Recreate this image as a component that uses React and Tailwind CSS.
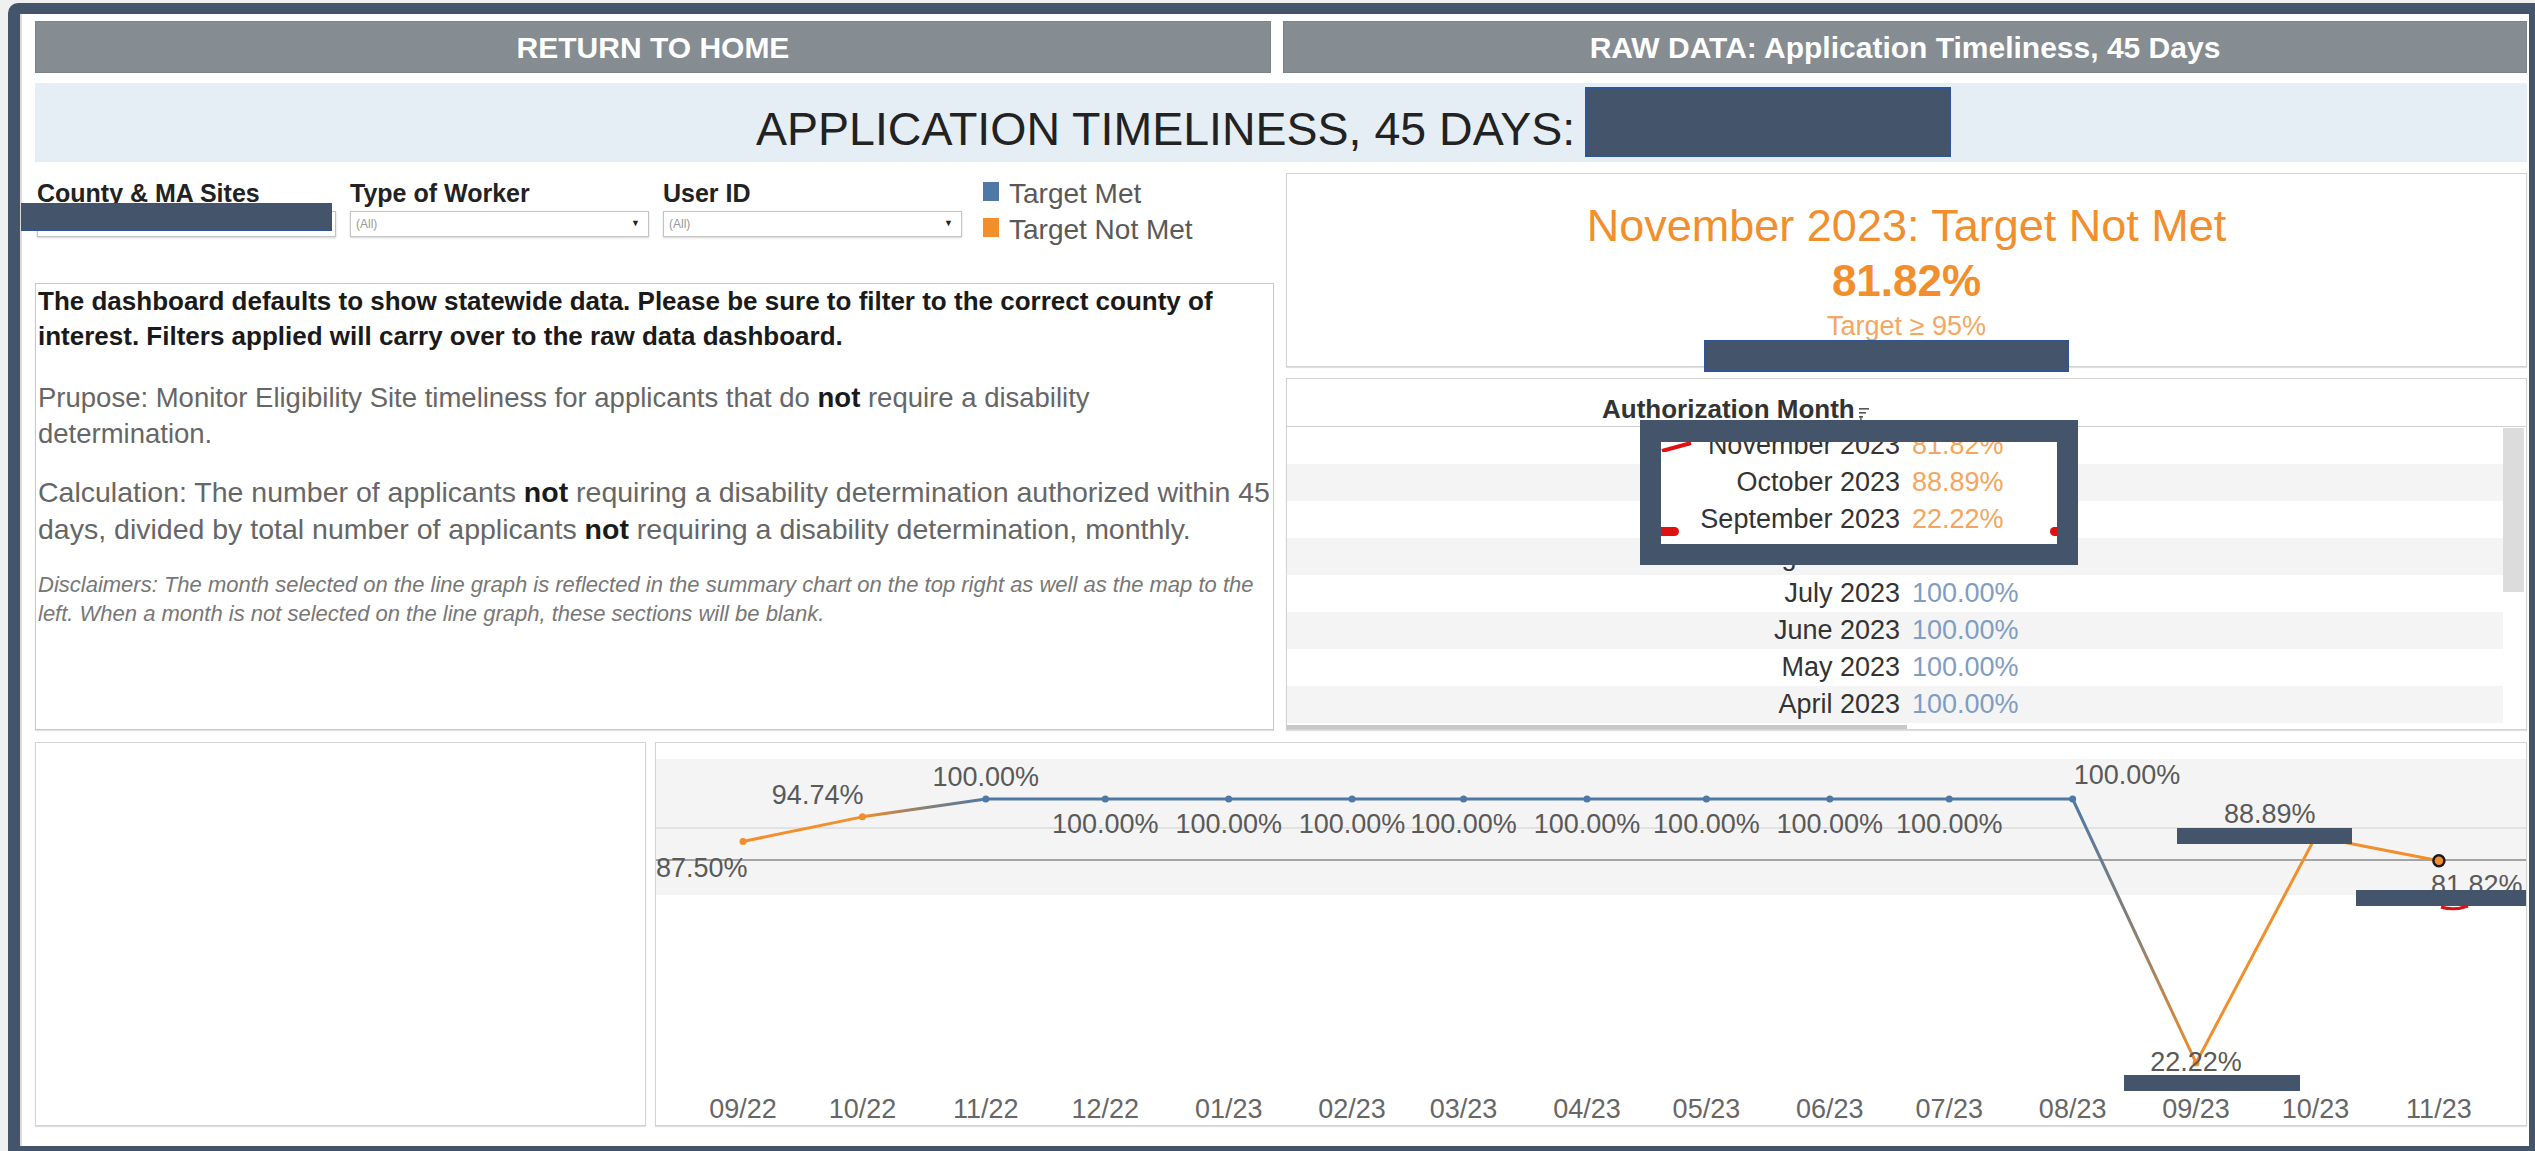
import React from 'react';

const ORANGE = '#f28e2b';
const BLUE = '#4e79a7';

// days are counted from 2022-09-01 so the axis spacing follows month length
const POINTS = [
  { label: '09/22', day: 0, value: 87.5 },
  { label: '10/22', day: 30, value: 94.74 },
  { label: '11/22', day: 61, value: 100 },
  { label: '12/22', day: 91, value: 100 },
  { label: '01/23', day: 122, value: 100 },
  { label: '02/23', day: 153, value: 100 },
  { label: '03/23', day: 181, value: 100 },
  { label: '04/23', day: 212, value: 100 },
  { label: '05/23', day: 242, value: 100 },
  { label: '06/23', day: 273, value: 100 },
  { label: '07/23', day: 303, value: 100 },
  { label: '08/23', day: 334, value: 100 },
  { label: '09/23', day: 365, value: 22.22 },
  { label: '10/23', day: 395, value: 88.89 },
  { label: '11/23', day: 426, value: 81.82 },
];

const TABLE_ROWS = [
  { month: 'November 2023', value: '81.82%', met: false },
  { month: 'October 2023', value: '88.89%', met: false },
  { month: 'September 2023', value: '22.22%', met: false },
  { month: 'August 2023', value: '100.00%', met: true },
  { month: 'July 2023', value: '100.00%', met: true },
  { month: 'June 2023', value: '100.00%', met: true },
  { month: 'May 2023', value: '100.00%', met: true },
  { month: 'April 2023', value: '100.00%', met: true },
  { month: 'March 2023', value: '100.00%', met: true },
];

const FILTERS = ['County & MA Sites', 'Type of Worker', 'User ID'];

const px = (d) => 87 + d * 3.981;
const py = (v) => 56 + (100 - v) * 3.394;

function TimelinessChart() {
  const pts = POINTS.map((p) => ({ ...p, x: px(p.day), y: py(p.value), met: p.value >= 95 }));
  const segs = pts.slice(0, -1).map((a, i) => ({ a, b: pts[i + 1], i }));

  // data label placement per point
  const labels = [
    { i: 0, dx: -87, y: 134, anchor: 'start' },
    { i: 1, dx: 1, y: 61, anchor: 'end' },
    { i: 2, dx: 0, y: 43, anchor: 'middle' },
    ...[3, 4, 5, 6, 7, 8, 9, 10].map((i) => ({ i, dx: 0, y: 90, anchor: 'middle' })),
    { i: 11, dx: 1, y: 41, anchor: 'start' },
    { i: 12, dx: 0, y: 328, anchor: 'middle' },
    { i: 13, dx: 0, y: 80, anchor: 'end' },
    { i: 14, dx: -8, y: 151, anchor: 'start' },
  ];
  const fmt = (v) => v.toFixed(2) + '%';

  return (
    <svg width="1870" height="382" className="block" fontFamily="'Liberation Sans', Arial, sans-serif">
      <defs>
        {segs
          .filter((s) => s.a.met !== s.b.met)
          .map((s) => (
            <linearGradient key={s.i} id={`seg-${s.i}`} gradientUnits="userSpaceOnUse" x1={s.a.x} y1={s.a.y} x2={s.b.x} y2={s.b.y}>
              <stop offset="0" stopColor={s.a.met ? BLUE : ORANGE} />
              <stop offset="0.5" stopColor="#8a7f72" />
              <stop offset="1" stopColor={s.b.met ? BLUE : ORANGE} />
            </linearGradient>
          ))}
      </defs>

      <rect x="0" y="16" width="1870" height="136" fill="#f4f4f4" />
      <line x1="0" y1="85" x2="1870" y2="85" stroke="#e2e2e2" strokeWidth="2" />
      <line x1="0" y1="117" x2="1870" y2="117" stroke="#a3a3a3" strokeWidth="2" />

      {segs.map((s) => (
        <line
          key={s.i}
          x1={s.a.x}
          y1={s.a.y}
          x2={s.b.x}
          y2={s.b.y}
          strokeWidth="3"
          strokeLinecap="round"
          stroke={s.a.met === s.b.met ? (s.a.met ? BLUE : ORANGE) : `url(#seg-${s.i})`}
        />
      ))}
      {pts.slice(0, -1).map((p) => (
        <circle key={p.label} cx={p.x} cy={p.y} r="3.5" fill={p.met ? BLUE : ORANGE} />
      ))}
      <circle cx={pts[14].x} cy={pts[14].y} r="5.5" fill={ORANGE} stroke="#1a1a1a" strokeWidth="2.5" />

      {labels.map((l) => (
        <text key={l.i} x={pts[l.i].x + l.dx} y={l.y} textAnchor={l.anchor} fontSize="27" fill="#595959">
          {fmt(pts[l.i].value)}
        </text>
      ))}

      {pts.map((p) => (
        <text key={p.label} x={p.x} y="375" textAnchor="middle" fontSize="27" fill="#666">
          {p.label}
        </text>
      ))}

      {/* redaction bars */}
      <rect x="1521" y="85" width="175" height="16" fill="#44546a" />
      <rect x="1700" y="147" width="180" height="16" fill="#44546a" />
      <rect x="1468" y="332" width="176" height="16" fill="#44546a" />
      <path d="M1785 164 Q1798 168 1812 163" stroke="#e01010" strokeWidth="3" fill="none" />
    </svg>
  );
}

function SortIcon() {
  return (
    <svg width="14" height="18" viewBox="0 0 14 18" className="ml-[3px] mt-[8px]">
      <rect x="1" y="4" width="10" height="1.6" fill="#555" />
      <rect x="1" y="8" width="7" height="1.6" fill="#555" />
      <rect x="1" y="12" width="4" height="1.6" fill="#555" />
      <rect x="2.2" y="13" width="1.4" height="4" fill="#555" />
    </svg>
  );
}

function TableRow({ row, shaded, monthWidth }) {
  return (
    <div className={`flex h-[37px] items-center text-[27px] leading-none ${shaded ? 'bg-[#f4f4f4]' : ''}`}>
      <span className="shrink-0 text-right text-[#333]" style={{ width: monthWidth }}>
        {row.month}
      </span>
      <span className={`ml-[12px] ${row.met ? 'text-[#7f9dc3]' : 'text-[#f5a55e]'}`}>{row.value}</span>
    </div>
  );
}

export default function App() {
  return (
    <div className="min-h-screen w-full bg-[#f0f0f0] pl-[8px] pt-[3px] font-['Liberation_Sans',Arial,sans-serif]">
      <div className="h-[1148px] w-[2527px] rounded-tl-[10px] bg-[#44546a] pb-[5px] pl-[12px] pr-[6px] pt-[11px]">
        <div className="flex h-full flex-col border-l-2 border-[#dcdcdc] bg-white pb-[20px] pl-[13px] pr-[2px] pt-[7px]">
          {/* nav buttons */}
          <div className="flex h-[52px] gap-[12px]">
            <div className="flex w-[1236px] items-center justify-center border border-[#7a8187] bg-[#858c92] text-[30px] font-bold text-white">
              RETURN TO HOME
            </div>
            <div className="flex flex-1 items-center justify-center border border-[#7a8187] bg-[#858c92] text-[30px] font-bold text-white">
              RAW DATA: Application Timeliness, 45 Days
            </div>
          </div>

          {/* title band */}
          <div className="relative mt-[10px] h-[79px] bg-[#e6eef5] pl-[721px] pt-[23px]">
            <div className="whitespace-nowrap text-[46.5px] leading-none text-[#222]">APPLICATION TIMELINESS, 45 DAYS:</div>
            <div className="absolute left-[1550px] top-[4px] h-[70px] w-[366px] border-2 border-[#2f5597] bg-[#44546a]" />
          </div>

          {/* middle */}
          <div className="mt-[11px] flex h-[557px] gap-[12px]">
            <div className="flex w-[1239px] flex-col">
              <div className="relative flex h-[110px] gap-[14px] pl-[2px] pt-[5px]">
                {FILTERS.map((f) => (
                  <div key={f} className="w-[299px]">
                    <div className="h-[30px] whitespace-nowrap text-[25px] font-bold leading-[30px] text-[#222]">{f}</div>
                    <div className="mt-[3px] flex h-[26px] items-center justify-between border border-[#c4c4c4] bg-white pl-[5px] pr-[8px] shadow-[0_1px_2px_rgba(0,0,0,0.18)]">
                      <span className="text-[12px] text-[#999]">(All)</span>
                      <span className="text-[9px] text-[#222]">▼</span>
                    </div>
                  </div>
                ))}
                <div className="-mt-[2px] ml-[7px] flex flex-col">
                  <div className="flex h-[36px] items-start gap-[10px]">
                    <span className="mt-[6px] h-[19px] w-[16px] bg-[#4e79a7]" />
                    <span className="text-[28px] leading-[36px] text-[#595959]">Target Met</span>
                  </div>
                  <div className="flex h-[36px] items-start gap-[10px]">
                    <span className="mt-[6px] h-[19px] w-[16px] bg-[#f28e2b]" />
                    <span className="text-[28px] leading-[36px] text-[#595959]">Target Not Met</span>
                  </div>
                </div>
                <div className="absolute left-[-14px] top-[30px] h-[28px] w-[311px] border border-b-2 border-[#2f5597] bg-[#44546a]" />
              </div>

              <div className="flex-1 border border-[#c9c9c9] px-[2px] shadow-[0_1px_1px_rgba(0,0,0,0.12)]">
                <p className="whitespace-nowrap text-[26px] font-bold leading-[35px] text-[#1a1a1a]">
                  The dashboard defaults to show statewide data. Please be sure to filter to the correct county of
                  <br />
                  interest. Filters applied will carry over to the raw data dashboard.
                </p>
                <p className="mt-[26px] whitespace-nowrap text-[27.5px] leading-[36px] text-[#666]">
                  Prupose: Monitor Eligibility Site timeliness for applicants that do <b className="text-[#1a1a1a]">not</b> require a disability
                  <br />
                  determination.
                </p>
                <p className="mt-[22px] whitespace-nowrap text-[28.5px] leading-[37px] text-[#666]">
                  Calculation: The number of applicants <b className="text-[#1a1a1a]">not</b> requiring a disability determination authorized within 45
                  <br />
                  days, divided by total number of applicants <b className="text-[#1a1a1a]">not</b> requiring a disability determination, monthly.
                </p>
                <p className="mt-[22px] whitespace-nowrap text-[22px] italic leading-[29px] text-[#777]">
                  Disclaimers: The month selected on the line graph is reflected in the summary chart on the top right as well as the map to the
                  <br />
                  left. When a month is not selected on the line graph, these sections will be blank.
                </p>
              </div>
            </div>

            <div className="flex flex-1 flex-col">
              {/* selected month summary */}
              <div className="relative h-[194px] border border-[#d3d3d3] text-center shadow-[0_1px_1px_rgba(0,0,0,0.12)]">
                <div className="pt-[29px] text-[45px] leading-[45px] text-[#f28e2b]">November 2023: Target Not Met</div>
                <div className="mt-[11px] text-[44px] font-bold leading-[44px] text-[#f28e2b]">81.82%</div>
                <div className="mt-[10px] text-[27px] leading-[27px] text-[#f5a662]">Target ≥ 95%</div>
                <div className="absolute left-[417px] top-[166px] h-[32px] w-[365px] border-2 border-[#2f5597] bg-[#44546a]" />
              </div>

              {/* month table */}
              <div className="relative mt-[11px] flex flex-1 flex-col overflow-hidden border border-[#d3d3d3] shadow-[0_1px_1px_rgba(0,0,0,0.12)]">
                <div className="flex h-[48px] shrink-0 items-start border-b border-[#cfcfcf] pl-[315px] pt-[17px]">
                  <span className="text-[26px] font-bold leading-[26px] text-[#333]">Authorization Month</span>
                  <SortIcon />
                </div>
                <div className="relative flex flex-1 overflow-hidden">
                  <div className="flex-1">
                    {TABLE_ROWS.map((r, i) => (
                      <TableRow key={r.month} row={r} shaded={i % 2 === 1} monthWidth={613} />
                    ))}
                  </div>
                  <div className="w-[23px] shrink-0">
                    <div className="mt-[1px] h-[164px] w-[21px] bg-[#dcdcdc]" />
                  </div>
                  <div className="absolute bottom-0 left-0 h-[4px] w-[620px] bg-[#c8c8c8]" />
                </div>

                <div className="absolute left-[353px] top-[41px] h-[145px] w-[438px] overflow-hidden border-[21px] border-t-[22px] border-[#44546a] bg-white">
                  <div className="-mt-[15px]">
                    {TABLE_ROWS.slice(0, 4).map((r) => (
                      <TableRow key={r.month} row={r} shaded={false} monthWidth={239} />
                    ))}
                  </div>
                  <svg className="absolute left-0 top-0" width="32" height="10">
                    <path d="M1 9 L30 1" stroke="#e01010" strokeWidth="4" />
                  </svg>
                  <span className="absolute left-0 top-[85px] h-[9px] w-[18px] rounded-r-full bg-[#e01010]" />
                  <span className="absolute right-0 top-[85px] h-[9px] w-[7px] rounded-l-full bg-[#e01010]" />
                </div>
              </div>
            </div>
          </div>

          {/* bottom row */}
          <div className="mt-[12px] flex h-[384px] gap-[9px]">
            <div className="w-[611px] border border-[#d3d3d3] shadow-[0_1px_1px_rgba(0,0,0,0.12)]" />
            <div className="flex-1 overflow-hidden border border-[#d3d3d3] shadow-[0_1px_1px_rgba(0,0,0,0.12)]">
              <TimelinessChart />
            </div>
          </div>
        </div>
      </div>
    </div>
  );
}
